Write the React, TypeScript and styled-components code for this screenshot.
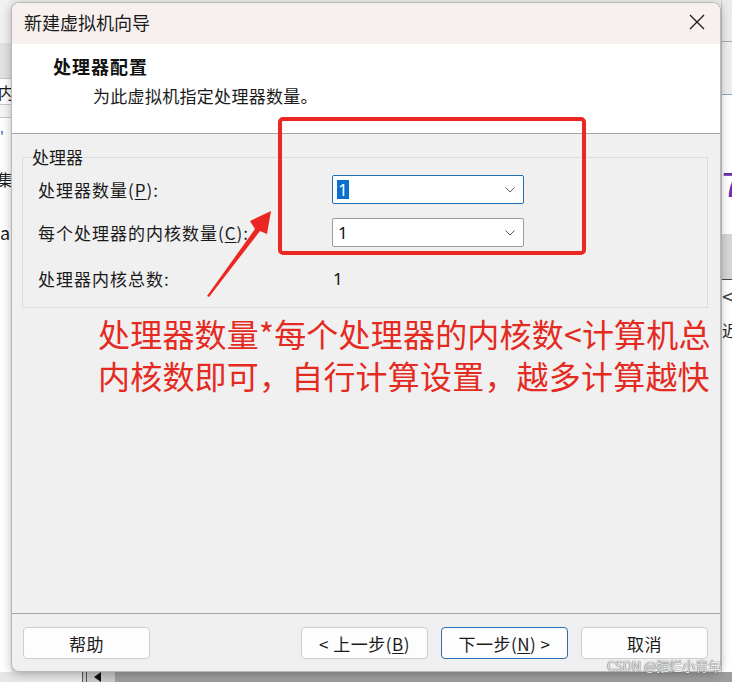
import React from "react";
import styled, { createGlobalStyle } from "styled-components";

const GlobalStyle = createGlobalStyle`
  html, body { margin: 0; padding: 0; background: #f0f0f0; }
  body { font-family: "Noto Sans CJK SC", "Noto Sans", sans-serif; }
  * { box-sizing: border-box; }
`;

const FONT = `"Noto Sans CJK SC", "Noto Sans", sans-serif`;

const Screen = styled.div`
  position: relative;
  width: 732px;
  height: 682px;
  display: grid;
  grid-template-columns: 11px 710px 11px;
  grid-template-rows: 2px 670px 10px;
  background: #efefef;
  overflow: hidden;
  font-family: ${FONT};
`;

/* ---------- background application (behind the dialog) ---------- */
const LeftStrip = styled.div`
  grid-column: 1;
  grid-row: 1 / 3;
  display: flex;
  flex-direction: column;
  background: #ffffff;
  overflow: visible;
`;

const RightStrip = styled.div`
  grid-column: 3;
  grid-row: 1 / 3;
  display: flex;
  flex-direction: column;
  background: #ffffff;
  border-left: 1px solid #c9c9c9;
`;

const Band = styled.div<{ $h: number; $bg: string; $line?: string }>`
  flex: 0 0 ${(p) => p.$h}px;
  background: ${(p) => p.$bg};
  border-bottom: ${(p) => (p.$line ? `1px solid ${p.$line}` : "none")};
`;

const BgText = styled.div<{ $h: number; $color?: string; $size?: number; $shift?: number }>`
  flex: 0 0 ${(p) => p.$h}px;
  display: flex;
  align-items: center;
  margin-left: ${(p) => p.$shift ?? 0}px;
  font-size: ${(p) => p.$size ?? 16}px;
  color: ${(p) => p.$color ?? "#1a1a1a"};
  white-space: nowrap;
  line-height: 1;
`;

const TabCell = styled(BgText)`
  background: #ffffff;
  border-top: 1px solid #c8c8c8;
  border-bottom: 1px solid #c8c8c8;
`;

const Filler = styled.div<{ $bg: string }>`
  flex: 1;
  background: ${(p) => p.$bg};
`;

const BottomStrip = styled.div`
  grid-column: 1 / 4;
  grid-row: 3;
  display: flex;
  background: #9d9d9d;
`;

const BottomPiece = styled.div<{ $w: number; $bg: string }>`
  flex: 0 0 ${(p) => p.$w}px;
  background: ${(p) => p.$bg};
  display: flex;
  align-items: flex-start;
`;

const VLine = styled.span`
  width: 1px;
  height: 10px;
  margin-right: 3px;
  background: #555;
`;

const Tri = styled.span`
  margin-left: 4px;
  width: 0;
  height: 0;
  border-top: 5px solid transparent;
  border-bottom: 5px solid transparent;
  border-right: 7px solid #111;
`;

/* ---------- dialog ---------- */
const Dialog = styled.div`
  grid-column: 2;
  grid-row: 2;
  position: relative;
  z-index: 2;
  display: flex;
  flex-direction: column;
  background: #f0f0f0;
  border: 1px solid #b8b8b8;
  border-radius: 8px;
  overflow: hidden;
  box-shadow: 0 2px 10px rgba(0, 0, 0, 0.28);
`;

const TitleBar = styled.div`
  flex: 0 0 41px;
  display: flex;
  align-items: center;
  justify-content: space-between;
  padding: 0 14px 3px 12px;
  background: #f7f0ee;
  font-size: 18px;
  color: #1a1a1a;
`;

const CloseBtn = styled.span`
  display: flex;
  width: 18px;
  height: 18px;
  align-items: center;
  justify-content: center;
`;

const Header = styled.div`
  flex: 0 0 90px;
  background: #ffffff;
  border-bottom: 1px solid #a5a5a5;
  padding: 10px 0 0 41px;
  display: flex;
  flex-direction: column;
  gap: 6px;
`;

const HeaderTitle = styled.div`
  font-size: 18px;
  line-height: 24px;
  font-weight: 700;
  letter-spacing: 1px;
  color: #111;
`;

const HeaderSub = styled.div`
  padding-left: 40px;
  font-size: 17px;
  line-height: 24px;
  letter-spacing: 0.3px;
  color: #1a1a1a;
`;

const Content = styled.div`
  flex: 1;
  display: flex;
  flex-direction: column;
  padding: 0 12px 0 10px;
  border-bottom: 1px solid #a5a5a5;
`;

const Group = styled.fieldset`
  margin: 13px 0 0 0;
  padding: 8px 0 14px 0;
  border: 1px solid #dcdcdc;
  min-width: 0;
`;

const Legend = styled.legend`
  margin-left: 8px;
  padding: 0 1px;
  font-size: 17px;
  line-height: 20px;
  color: #1a1a1a;
`;

const Fields = styled.div`
  display: flex;
  flex-direction: column;
  gap: 14px;
  padding-left: 15px;
`;

const FieldRow = styled.div<{ $extra?: number }>`
  display: grid;
  grid-template-columns: 294px 192px;
  align-items: center;
  height: 29px;
  margin-top: ${(p) => p.$extra ?? 0}px;
`;

const Label = styled.span`
  font-size: 17px;
  letter-spacing: 1px;
  color: #1a1a1a;
  white-space: nowrap;
  u { text-decoration: underline; text-underline-offset: 2px; }
`;

const Combo = styled.div<{ $focused?: boolean }>`
  height: 29px;
  display: flex;
  align-items: center;
  justify-content: space-between;
  padding: 0 8px 0 4px;
  background: #ffffff;
  border: 1px solid ${(p) => (p.$focused ? "#1f6db3" : "#9c9c9c")};
  border-radius: 2px;
`;

const ComboValue = styled.span<{ $selected?: boolean }>`
  display: inline-block;
  padding: 0 1px;
  font-family: "Noto Sans", sans-serif;
  font-size: 17px;
  line-height: 19px;
  color: ${(p) => (p.$selected ? "#ffffff" : "#111")};
  background: ${(p) => (p.$selected ? "#0a6fcf" : "transparent")};
`;

const Value = styled.span`
  padding-left: 1px;
  font-family: "Noto Sans", sans-serif;
  font-size: 17px;
  color: #111;
`;

const Note = styled.div`
  margin-top: 4px;
  padding-left: 76px;
  font-size: 32px;
  line-height: 42px;
  letter-spacing: 0.2px;
  color: #e52a22;
  white-space: nowrap;
`;

const Footer = styled.div`
  flex: 0 0 57px;
  display: flex;
  align-items: flex-start;
  padding: 13px 12px 0 11px;
  gap: 13px;
`;

const Spacer = styled.div`
  flex: 1;
`;

const Button = styled.button<{ $primary?: boolean }>`
  width: 127px;
  height: 32px;
  padding: 0;
  background: #fdfdfd;
  border: 1px solid ${(p) => (p.$primary ? "#2a6fb3" : "#cdcdcd")};
  border-radius: 4px;
  font-family: ${FONT};
  font-size: 17px;
  color: #1b1b1b;
  letter-spacing: 0.5px;
  u { text-decoration: underline; text-underline-offset: 2px; }
`;

/* ---------- overlays ---------- */
const Annotation = styled.svg`
  position: absolute;
  left: 0;
  top: 0;
  z-index: 5;
  pointer-events: none;
`;

const Watermark = styled.div`
  position: absolute;
  left: 607px;
  top: 657px;
  z-index: 6;
  font-size: 13px;
  line-height: 17px;
  color: rgba(255, 255, 255, 0.9);
  text-shadow: 0 0 1px #555, 0 0 1px #555;
  white-space: nowrap;
`;

const Chevron = () => (
  <svg width="10" height="6" viewBox="0 0 10 6">
    <polyline points="0.5,0.5 5,5 9.5,0.5" fill="none" stroke="#5a5a5a" strokeWidth="1" />
  </svg>
);

const CloseIcon = () => (
  <svg width="16" height="16" viewBox="0 0 16 16">
    <path d="M1 1 L15 15 M15 1 L1 15" stroke="#1a1a1a" strokeWidth="1.3" />
  </svg>
);

export default function App() {
  return (
    <>
      <GlobalStyle />
      <Screen>
        <LeftStrip>
          <Band $h={43} $bg="#f1f1f1" />
          <Band $h={35} $bg="#e2e2e2" />
          <TabCell $h={27} $shift={-2}>内容</TabCell>
          <Band $h={13} $bg="#f4f4f4" $line="#c8c8c8" />
          <BgText $h={36} $color="#1f5fbf" $size={14}>'</BgText>
          <BgText $h={50} $shift={-3}>集群</BgText>
          <BgText $h={56} $size={18}>a(</BgText>
          <Filler $bg="#ffffff" />
        </LeftStrip>

        <RightStrip>
          <Band $h={42} $bg="#ebebeb" $line="#a8a8a8" />
          <Band $h={53} $bg="#eeeeee" $line="#8aa6c8" />
          <Band $h={70} $bg="#ffffff" />
          <BgText $h={36} $color="#6a2fb0" $size={34}>7</BgText>
          <Band $h={33} $bg="#ffffff" />
          <Band $h={46} $bg="#d6d6d6" $line="#444" />
          <BgText $h={30} $color="#444" $size={22}>&lt;</BgText>
          <BgText $h={40} $size={16}>近</BgText>
          <Filler $bg="#ffffff" />
        </RightStrip>

        <Dialog>
          <TitleBar>
            <span>新建虚拟机向导</span>
            <CloseBtn>
              <CloseIcon />
            </CloseBtn>
          </TitleBar>

          <Header>
            <HeaderTitle>处理器配置</HeaderTitle>
            <HeaderSub>为此虚拟机指定处理器数量。</HeaderSub>
          </Header>

          <Content>
            <Group>
              <Legend>处理器</Legend>
              <Fields>
                <FieldRow>
                  <Label>
                    处理器数量(<u>P</u>):
                  </Label>
                  <Combo $focused>
                    <ComboValue $selected>1</ComboValue>
                    <Chevron />
                  </Combo>
                </FieldRow>
                <FieldRow>
                  <Label>
                    每个处理器的内核数量(<u>C</u>):
                  </Label>
                  <Combo>
                    <ComboValue>1</ComboValue>
                    <Chevron />
                  </Combo>
                </FieldRow>
                <FieldRow $extra={3}>
                  <Label>处理器内核总数:</Label>
                  <Value>1</Value>
                </FieldRow>
              </Fields>
            </Group>
            <Note>
              处理器数量*每个处理器的内核数&lt;计算机总
              <br />
              内核数即可，自行计算设置，越多计算越快
            </Note>
          </Content>

          <Footer>
            <Button>帮助</Button>
            <Spacer />
            <Button>
              &lt; 上一步(<u>B</u>)
            </Button>
            <Button $primary>
              下一步(<u>N</u>) &gt;
            </Button>
            <Button>取消</Button>
          </Footer>
        </Dialog>

        <BottomStrip>
          <BottomPiece $w={82} $bg="#e6e6e6" />
          <BottomPiece $w={33} $bg="#c8c8c8">
            <VLine />
            <VLine />
            <Tri />
          </BottomPiece>
          <Filler $bg="#9d9d9d" />
        </BottomStrip>

        <Annotation width="732" height="682" viewBox="0 0 732 682">
          <rect x="280" y="119" width="304" height="134" rx="3" fill="none" stroke="#ec2620" strokeWidth="4" />
          <polygon
            points="207,296 255,229 250,221 271,211 267,234 260,231 209,297"
            fill="#ec2620"
          />
        </Annotation>

        <Watermark>CSDN @摆烂小青年</Watermark>
      </Screen>
    </>
  );
}
